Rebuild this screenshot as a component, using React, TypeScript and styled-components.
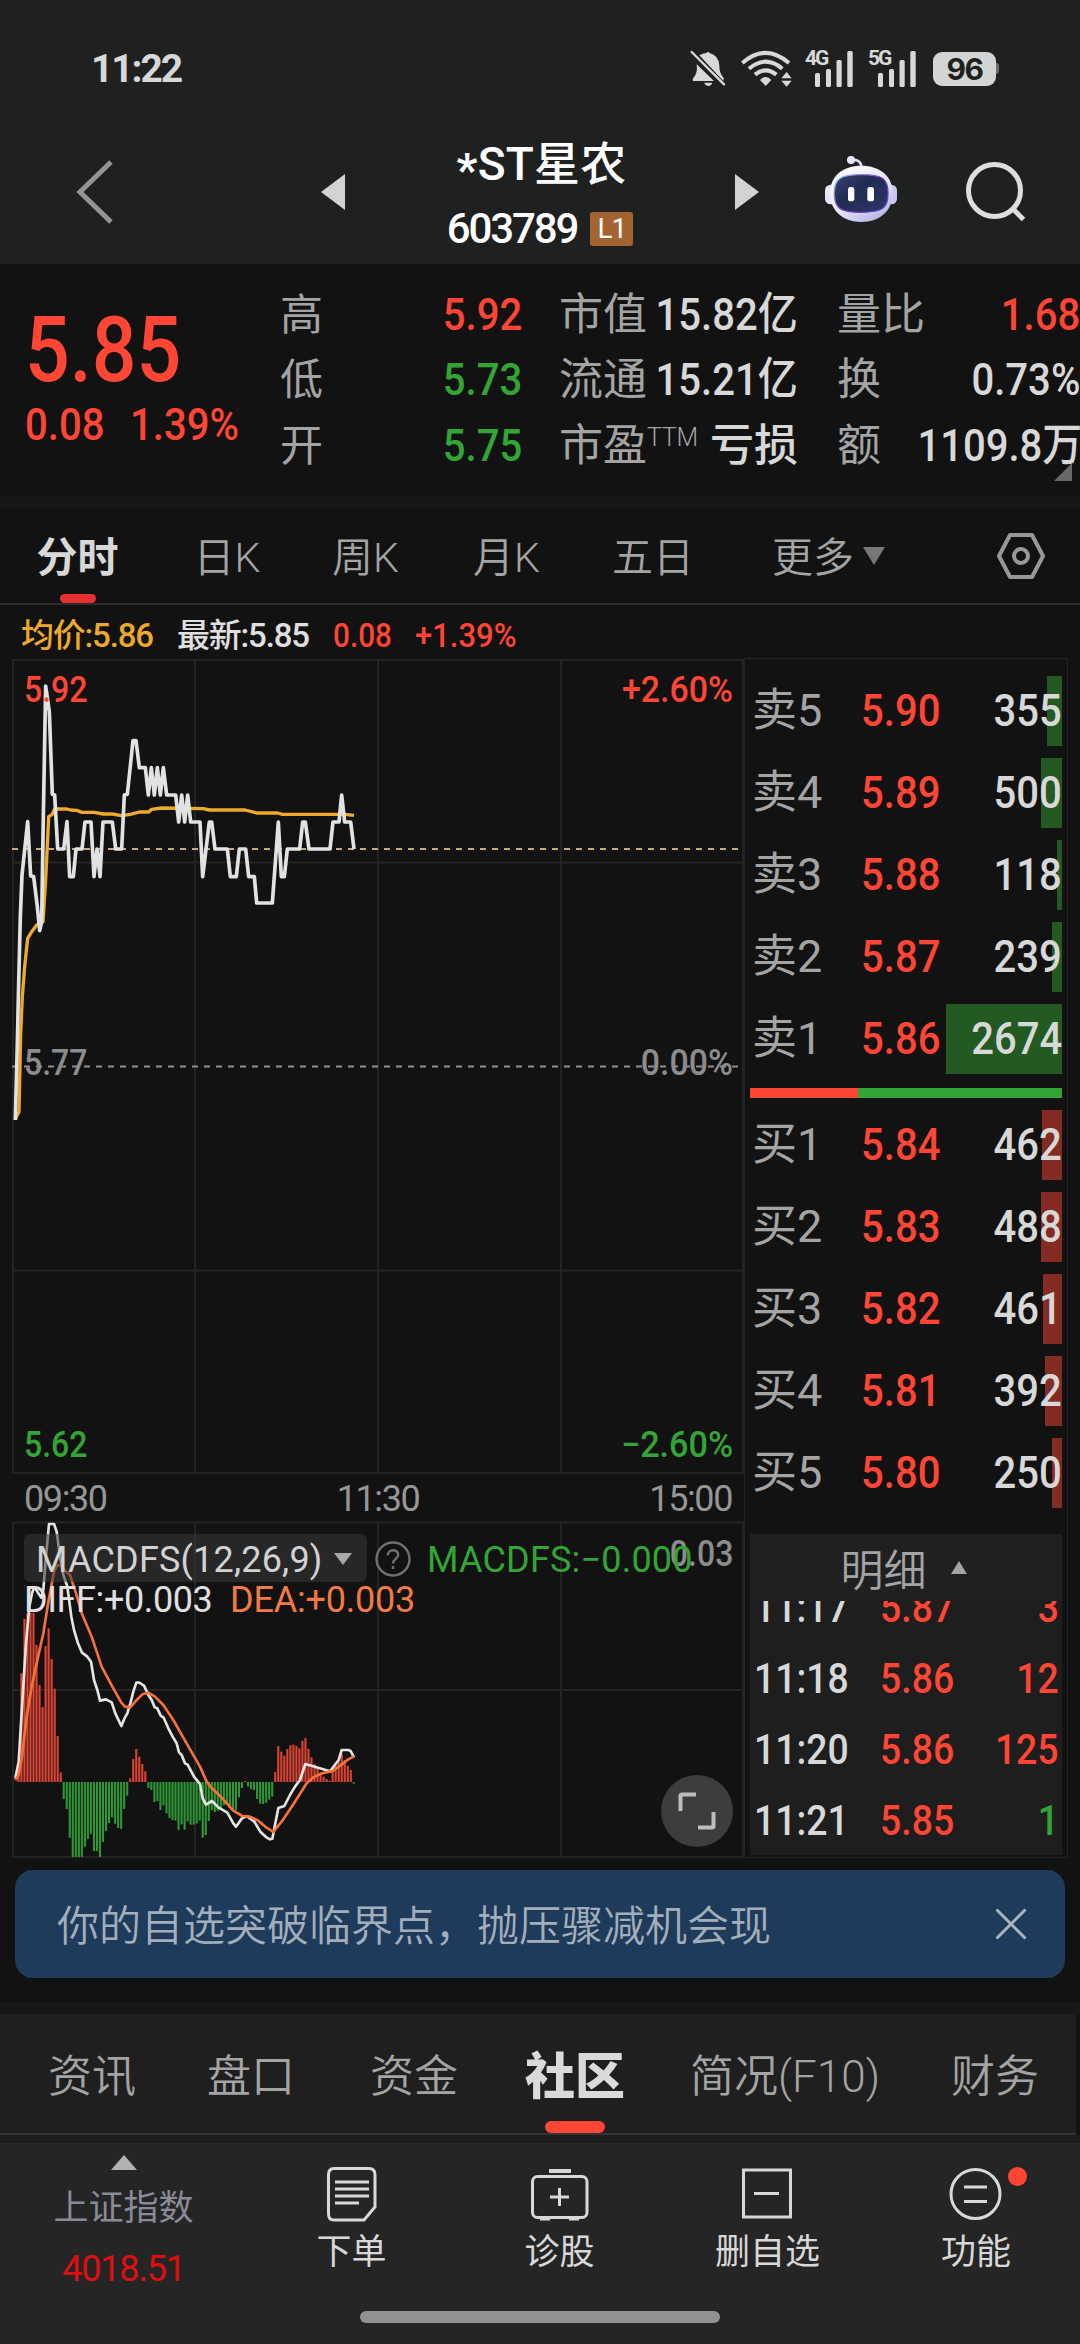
import React from "react";
import styled, { createGlobalStyle } from "styled-components";

const RED = "#ff4634";
const GREEN = "#32a534";
const WHITE = "#d8d8d8";
const GREY = "#a4a4a4";
const DIM = "#8c8c8c";
const LINE = "#242424";

const GlobalStyle = createGlobalStyle`
  * { box-sizing: border-box; }
  html, body { margin: 0; padding: 0; background: #121212; }
  body {
    overflow: hidden;
    font-family: Roboto, "Noto Sans CJK SC", sans-serif;
    -webkit-font-smoothing: antialiased;
  }
  svg { display: block; flex: none; }
`;

const Page = styled.div`
  width: 1080px;
  height: 2344px;
  display: flex;
  flex-direction: column;
  background: #121212;
  overflow: hidden;
`;

const Txt = styled.span<{
  $size: number;
  $color?: string;
  $weight?: number;
  $ls?: number;
  $line?: number;
  $mt?: number;
}>`
  display: block;
  flex: none;
  white-space: nowrap;
  font-size: ${(p) => p.$size}px;
  color: ${(p) => p.$color ?? WHITE};
  font-weight: ${(p) => p.$weight ?? 400};
  letter-spacing: ${(p) => p.$ls ?? 0}px;
  line-height: ${(p) => p.$line ?? 50}px;
  margin-top: ${(p) => p.$mt ?? 0}px;
`;

/* Condensed figures used for prices and volumes. */
const Figure = styled(Txt)<{ $end?: boolean; $scale?: number }>`
  transform: scaleX(${(p) => p.$scale ?? 0.89});
  transform-origin: ${(p) => (p.$end ? "right" : "left")} center;
`;

/* ---------- header ---------- */

const Header = styled.header`
  height: 264px;
  flex: none;
  background: #1f2120;
`;

const StatusBar = styled.div`
  height: 137px;
  display: flex;
  align-items: center;
  justify-content: space-between;
  padding: 0 81px 0 91px;
`;

const StatusIcons = styled.div`
  display: flex;
  align-items: center;
`;

const StatusIcon = styled.div<{ $w: number }>`
  width: ${(p) => p.$w}px;
`;

const Signal = styled.div`
  position: relative;
  width: 48px;
  margin-right: 15px;
`;

const SignalLabel = styled.span`
  position: absolute;
  left: 0;
  top: -5px;
  font-size: 21px;
  line-height: 24px;
  font-weight: 700;
  letter-spacing: -2px;
  color: ${WHITE};
`;

const Battery = styled.div`
  width: 63px;
  height: 34px;
  border-radius: 9px;
  margin-left: 2px;
  background: #d3d5d4;
  color: #1f2120;
  font: 700 30px/35px Inter, sans-serif;
  letter-spacing: -1.5px;
  text-align: center;
`;

const BatteryNub = styled.div`
  width: 3px;
  height: 11px;
  background: #6b6d6c;
  border-radius: 0 3px 3px 0;
`;

const TitleBar = styled.div`
  height: 127px;
  display: flex;
  align-items: flex-start;
`;

const IconSlot = styled.div<{ $w: number; $l?: number; $t?: number }>`
  width: ${(p) => p.$w}px;
  padding-left: ${(p) => p.$l ?? 0}px;
  padding-top: ${(p) => p.$t ?? 0}px;
  flex: none;
`;

const StockTitle = styled.div`
  width: 390px;
  flex: none;
  display: flex;
  flex-direction: column;
  align-items: center;
  padding-top: 1px;
`;

const StockName = styled.div`
  padding-left: 3px;
`;

const Star = styled.span`
  position: relative;
  top: 6px;
  font-weight: 700;
`;

const CodeRow = styled.div`
  display: flex;
  align-items: center;
  gap: 13px;
  margin-top: 16px;
`;

const LevelBadge = styled.span`
  width: 43px;
  height: 34px;
  border-radius: 3px;
  background: #a36431;
  color: #fff;
  font-size: 28px;
  line-height: 34px;
  letter-spacing: -1px;
  text-align: center;
`;

/* ---------- quote ---------- */

const Quote = styled.section`
  height: 232px;
  flex: none;
  position: relative;
  display: grid;
  grid-template-columns: 281px 241px 238px 242px;
  padding-top: 18px;
`;

const MainPrice = styled.div`
  padding: 24px 0 0 25px;
`;

const ChangeRow = styled.div`
  display: grid;
  grid-template-columns: 105px 120px;
  margin-top: 4px;
`;

const QuoteCol = styled.div<{ $ml?: number }>`
  margin-left: ${(p) => (p.$ml ?? 0) - 1}px;
  margin-right: -${(p) => p.$ml ?? 0}px;
  display: flex;
  flex-direction: column;
`;

const QuoteRow = styled.div`
  height: 65.5px;
  display: grid;
  grid-template-columns: 60px 1fr;
  align-items: center;
`;

const QuoteValue = styled.div`
  display: flex;
  justify-content: flex-end;
`;

const LabelGroup = styled.div`
  display: flex;
  align-items: flex-start;
`;

const Corner = styled.div`
  position: absolute;
  right: 8px;
  top: 199px;
  border-left: 18px solid transparent;
  border-bottom: 18px solid #696969;
`;

const Strip = styled.div`
  height: 12px;
  flex: none;
  background: #171717;
`;

/* ---------- chart tabs ---------- */

const ChartTabs = styled.nav`
  height: 97px;
  flex: none;
  display: flex;
  border-bottom: 2px solid #2b2b2b;
`;

const ChartTab = styled.div<{ $w: number }>`
  width: ${(p) => p.$w}px;
  flex: none;
  display: flex;
  flex-direction: column;
  align-items: center;
  justify-content: space-between;
  padding-top: 25px;
`;

const MoreTab = styled.div`
  width: 268px;
  flex: none;
  display: flex;
  gap: 9px;
  padding: 25px 0 0 47px;
`;

const Mark = styled.i<{ $w: number; $h: number; $c: string }>`
  display: block;
  width: ${(p) => p.$w}px;
  height: ${(p) => p.$h}px;
  background: ${(p) => p.$c};
  border-radius: ${(p) => p.$h / 2}px;
`;

const Triangle = styled.i<{ $w: number; $h: number; $c: string; $down?: boolean; $mt?: number }>`
  display: block;
  width: 0;
  height: 0;
  margin-top: ${(p) => p.$mt ?? 0}px;
  border-left: ${(p) => p.$w / 2}px solid transparent;
  border-right: ${(p) => p.$w / 2}px solid transparent;
  ${(p) => (p.$down ? "border-top" : "border-bottom")}: ${(p) => p.$h}px solid ${(p) => p.$c};
`;

/* ---------- market area ---------- */

const Market = styled.section`
  height: 1253px;
  flex: none;
  display: grid;
  grid-template-columns: 744px 324px;
`;

const ChartColumn = styled.div`
  display: flex;
  flex-direction: column;
`;

const InfoRow = styled.div`
  height: 54px;
  display: grid;
  grid-template-columns: 156px 156px 82px 140px;
  align-items: center;
  padding: 6px 0 0 21px;
`;

const ChartBox = styled.div<{ $h: number }>`
  position: relative;
  height: ${(p) => p.$h}px;
  flex: none;
`;

const Overlay = styled.div<{ $top: number; $left?: number; $right?: number }>`
  position: absolute;
  top: ${(p) => p.$top}px;
  ${(p) => (p.$left !== undefined ? `left: ${p.$left}px;` : "")}
  ${(p) => (p.$right !== undefined ? `right: ${p.$right}px;` : "")}
  display: flex;
  align-items: center;
`;

const TimeRow = styled.div`
  height: 48px;
  flex: none;
  display: flex;
  justify-content: space-between;
  align-items: center;
  padding: 4px 12px 0 24px;
`;

const IndicatorButton = styled.button`
  width: 343px;
  height: 48px;
  border: 0;
  border-radius: 6px;
  padding: 4px 15px 0 12px;
  background: rgba(56, 56, 56, 0.55);
  display: flex;
  align-items: center;
  justify-content: space-between;
  font-family: inherit;
`;

const ExpandButton = styled.div`
  position: absolute;
  left: 661px;
  top: 254px;
  width: 72px;
  height: 72px;
  border-radius: 50%;
  background: #3d3d3d;
  display: flex;
  align-items: center;
  justify-content: center;
`;

/* ---------- order book ---------- */

const Book = styled.div`
  margin-top: 53px;
  height: 1200px;
  border: 1px solid ${LINE};
  padding: 11px 5px 0 5px;
  display: flex;
  flex-direction: column;
`;

const BookRow = styled.div`
  position: relative;
  height: 82px;
  flex: none;
  display: grid;
  grid-template-columns: 111px 90px 111px;
  align-items: center;
`;

const VolumeBar = styled.i<{ $w: number; $c: string }>`
  position: absolute;
  right: 0;
  top: 6px;
  width: ${(p) => p.$w}px;
  height: 70px;
  background: ${(p) => p.$c};
`;

const Cell = styled.div<{ $l?: number; $end?: boolean }>`
  position: relative;
  display: flex;
  padding-left: ${(p) => p.$l ?? 0}px;
  justify-content: ${(p) => (p.$end ? "flex-end" : "flex-start")};
`;

const RatioBar = styled.div`
  height: 10px;
  flex: none;
  margin: 8px 0 6px;
  background: linear-gradient(to right, ${RED} 0 108px, ${GREEN} 108px);
`;

const Details = styled.div`
  margin-top: 20px;
  height: 321px;
  flex: none;
  display: flex;
  flex-direction: column;
  background: #1e1e1e;
`;

const DetailsHead = styled.div`
  height: 67px;
  flex: none;
  display: flex;
  align-items: flex-start;
  justify-content: center;
  gap: 24px;
  padding: 12px 5px 0 0;
  background: #202020;
`;

const DetailsList = styled.div`
  flex: 1;
  overflow: hidden;
`;

const DetailRows = styled.div`
  margin-top: -29px;
`;

const DetailRow = styled.div`
  height: 71px;
  display: grid;
  grid-template-columns: 130px 90px 89px;
  align-items: center;
`;

/* ---------- banner and tabs ---------- */

const BannerWrap = styled.div`
  height: 144px;
  flex: none;
  padding: 12px 15px 0;
`;

const Banner = styled.div`
  height: 108px;
  border-radius: 18px;
  background: #1f3b5b;
  display: flex;
  align-items: center;
  justify-content: space-between;
  padding: 0 38px 0 42px;
`;

const Sections = styled.nav`
  width: 1076px;
  height: 121px;
  flex: none;
  background: #1f1f1f;
  border-bottom: 2px solid #343434;
  display: flex;
`;

const SectionTab = styled.div<{ $w: number }>`
  width: ${(p) => p.$w}px;
  flex: none;
  display: flex;
  flex-direction: column;
  align-items: center;
  justify-content: space-between;
  padding-top: 38px;
`;

/* ---------- bottom bar ---------- */

const Gap = styled.div`
  height: 8px;
  flex: none;
  background: #1c1c1c;
`;

const Bottom = styled.footer`
  flex: 1;
  background: #252525;
  display: flex;
  flex-direction: column;
  align-items: center;
  justify-content: space-between;
  padding-bottom: 21px;
`;

const BottomItems = styled.div`
  width: 1080px;
  display: grid;
  grid-template-columns: 247px 209px 207px 209px 208px;
`;

const IndexItem = styled.div`
  display: flex;
  flex-direction: column;
  align-items: center;
  padding-top: 12px;
`;

const ActionItem = styled.div`
  display: flex;
  flex-direction: column;
  align-items: center;
  padding-top: 21px;
`;

const ActionIcon = styled.div`
  position: relative;
  height: 60px;
`;

const Dot = styled.i`
  position: absolute;
  left: 62px;
  top: 3px;
  width: 19px;
  height: 19px;
  border-radius: 50%;
  background: ${RED};
`;

/* ---------- data ---------- */

const PRICE =
  "46,1410 52,1180 56,1000 61,800 66,675 83,515 92,678 101,680 112,770 119,842 125,815 130,500 137,108 148,185 157,433 164,435 173,597 191,597 201,515 209,680 220,680 228,597 246,597 255,516 273,516 282,680 291,597 300,680 309,516 337,516 347,597 365,597 373,435 382,433 399,272 408,272 418,353 436,353 445,435 454,353 463,435 472,353 481,435 490,353 500,435 527,435 536,516 545,435 554,516 563,435 572,516 600,516 608,680 628,516 635,516 645,597 682,597 691,680 709,680 718,597 737,597 746,680 763,680 770,759 817,759 835,516 844,680 853,680 862,597 899,597 908,516 916,516 927,597 990,597 999,516 1017,516 1025,435 1034,516 1052,516 1062,597";
const AVERAGE =
  "47,1405 57,1385 62,1150 67,1040 74,950 83,865 92,850 110,825 129,815 137,690 146,500 156,494 164,477 200,477 212,480 230,481 246,487 282,487 310,492 337,492 364,497 391,493 418,486 446,486 455,478 485,474 610,476 628,480 735,480 770,489 833,489 847,493 1034,493 1062,496";
const DIFF =
  "46,985 56,935 68,740 78,580 88,470 96,430 100,418 106,415 115,430 124,443 130,420 137,330 147,222 162,222 170,245 180,320 190,375 202,410 214,500 222,540 234,580 246,608 262,620 273,635 282,690 292,720 300,752 318,748 335,757 346,790 364,828 375,802 382,790 391,760 400,725 409,698 418,698 432,707 445,735 455,750 464,772 472,775 482,797 491,803 505,835 518,860 530,880 537,907 545,915 555,940 563,944 582,980 600,1002 608,1045 618,1064 636,1053 655,1072 682,1088 700,1120 708,1130 726,1105 740,1098 763,1115 781,1145 799,1162 810,1168 817,1166 826,1120 835,1074 853,1068 870,1035 885,1010 900,990 916,942 990,964 1016,930 1025,900 1045,900 1052,903 1062,922";
const DEA =
  "46,990 56,975 66,920 80,800 95,710 110,640 130,550 146,450 162,365 172,345 185,348 195,362 210,375 228,430 246,492 275,560 305,650 337,710 364,758 375,770 391,772 410,750 427,733 445,728 465,740 490,765 520,810 555,872 600,950 620,995 636,1015 664,1042 700,1082 727,1098 750,1100 775,1112 800,1133 820,1146 850,1108 885,1055 920,1000 940,982 965,970 998,963 1030,940 1045,928 1062,919";
const HISTOGRAM = [
  950, 670, 507, 490, 488, 488, 585, 705, 771, 588, 535, 627, 716, 858, 967, 1047, 1077, 1163,
  1221, 1221, 1221, 1221, 1190, 1167, 1152, 1203, 1203, 1221, 1176, 1143, 1119, 1102, 1121, 1134,
  1137, 1077, 1037, 985, 927, 897, 920, 942, 964, 1014, 1020, 1056, 1053, 1080, 1066, 1090, 1104,
  1110, 1112, 1140, 1123, 1139, 1114, 1124, 1124, 1120, 1112, 1163, 1155, 1113, 1080, 1086, 1082,
  1078, 1066, 1060, 1070, 1078, 1080, 1042, 1014, 993, 1010, 1018, 1020, 1047, 1061, 1062, 1058,
  1049, 1040, 966, 888, 905, 917, 897, 886, 884, 888, 895, 873, 864, 897, 922, 942, 955, 967, 980,
  987, 992, 958, 948, 935, 912, 930, 947, 960, 1001,
];

const SELLS: [string, string, string, number][] = [
  ["卖5", "5.90", "355", 15],
  ["卖4", "5.89", "500", 21],
  ["卖3", "5.88", "118", 5],
  ["卖2", "5.87", "239", 10],
  ["卖1", "5.86", "2674", 116],
];
const BUYS: [string, string, string, number][] = [
  ["买1", "5.84", "462", 20],
  ["买2", "5.83", "488", 21],
  ["买3", "5.82", "461", 19],
  ["买4", "5.81", "392", 17],
  ["买5", "5.80", "250", 10],
];
const TRADES: [string, string, string, boolean][] = [
  ["11:17", "5.87", "3", true],
  ["11:18", "5.86", "12", true],
  ["11:20", "5.86", "125", true],
  ["11:21", "5.85", "1", false],
];

/* ---------- pieces ---------- */

const Num = ({
  c = WHITE,
  s = 45,
  k,
  end,
  children,
}: {
  c?: string;
  s?: number;
  k?: number;
  end?: boolean;
  children: React.ReactNode;
}) => (
  <Figure $size={s} $color={c} $weight={500} $end={end} $scale={k}>
    {children}
  </Figure>
);

const Label = ({ s = 43, w = 400, children }: { s?: number; w?: number; children: React.ReactNode }) => (
  <Txt $size={s} $color={GREY} $weight={w}>
    {children}
  </Txt>
);

const QuoteItem = ({ label, value, c }: { label: React.ReactNode; value: string; c?: string }) => (
  <QuoteRow>
    <LabelGroup>{label}</LabelGroup>
    <QuoteValue>
      <Num end c={c}>{value}</Num>
    </QuoteValue>
  </QuoteRow>
);

const SignalBars = ({ name }: { name: string }) => (
  <Signal>
    <SignalLabel>{name}</SignalLabel>
    <svg width="48" height="36" viewBox="0 0 48 36" fill={WHITE}>
      <rect x="10" y="22" width="5" height="14" rx="1.5" />
      <rect x="21" y="18" width="5" height="18" rx="1.5" />
      <rect x="31.5" y="9" width="5.2" height="27" rx="1.5" />
      <rect x="42.3" y="0" width="5.4" height="36" rx="1.5" />
    </svg>
  </Signal>
);

const Robot = () => (
  <svg width="80" height="76" viewBox="60 30 240 228">
    <defs>
      <linearGradient id="shell" x1="0" y1="0" x2="0.7" y2="1">
        <stop offset="0" stopColor="#ffffff" />
        <stop offset="0.6" stopColor="#e9e8fb" />
        <stop offset="1" stopColor="#b9b6e6" />
      </linearGradient>
      <linearGradient id="rim" x1="0" y1="0" x2="1" y2="1">
        <stop offset="0" stopColor="#8fd0f2" />
        <stop offset="0.5" stopColor="#7a35c8" />
        <stop offset="1" stopColor="#4c46c9" />
      </linearGradient>
      <linearGradient id="visor" x1="0" y1="0" x2="1" y2="1">
        <stop offset="0" stopColor="#39456f" />
        <stop offset="0.4" stopColor="#202c52" />
        <stop offset="1" stopColor="#2c3768" />
      </linearGradient>
    </defs>
    <path d="M156 60Q185 58 184 84" fill="none" stroke="#e4e3f5" strokeWidth="8" />
    <circle cx="153" cy="60" r="12" fill="#e8e6fa" />
    <rect x="75" y="134" width="40" height="59" rx="17" fill="#e6e5f7" />
    <rect x="252" y="134" width="39" height="59" rx="17" fill="#c9c6ef" />
    <path
      d="M184 77C240 77 278 108 278 160S240 246 184 246S90 212 90 160S128 77 184 77Z"
      fill="url(#shell)"
    />
    <path
      d="M184 104C248 104 264 116 264 160S248 217 184 217S103 204 103 160S120 104 184 104Z"
      fill="url(#visor)"
      stroke="url(#rim)"
      strokeWidth="4"
    />
    <rect x="144" y="141" width="19" height="43" rx="8" fill="#fff" />
    <rect x="202" y="141" width="20" height="43" rx="8" fill="#fff" />
  </svg>
);

const PriceChart = () => (
  <ChartBox $h={814}>
    <svg width="744" height="816" viewBox="0 659 744 816">
      <path
        d="M12 660H744M12 1473H744M13 659V1474M195 659V1474M378 659V1474M561 659V1474M743 659V1474M12 862.5H744M12 1270.5H744"
        fill="none"
        stroke={LINE}
        strokeWidth="2"
      />
      <path d="M12 1066.5H738" stroke="#8f8f8f" strokeWidth="2" strokeDasharray="6 6" />
      <path d="M12 849H738" stroke="#c9a978" strokeWidth="2" strokeDasharray="6 6" />
      <g transform="translate(0 650) scale(0.33333)" fill="none" strokeLinejoin="round">
        <polyline points={AVERAGE} stroke="#efaa2a" strokeWidth="10" />
        <polyline points={PRICE} stroke="#e2e2e2" strokeWidth="11" />
      </g>
    </svg>
    <Overlay $top={6} $left={24}>
      <Num s={36} c={RED}>5.92</Num>
    </Overlay>
    <Overlay $top={6} $right={11}>
      <Num s={36} k={0.94} c={RED} end>+2.60%</Num>
    </Overlay>
    <Overlay $top={379} $left={24}>
      <Num s={36} c={DIM}>5.77</Num>
    </Overlay>
    <Overlay $top={379} $right={11}>
      <Num s={36} k={0.94} c={DIM} end>0.00%</Num>
    </Overlay>
    <Overlay $top={761} $left={24}>
      <Num s={36} c={GREEN}>5.62</Num>
    </Overlay>
    <Overlay $top={761} $right={11}>
      <Num s={36} k={0.95} c={GREEN} end>−2.60%</Num>
    </Overlay>
  </ChartBox>
);

const MacdChart = () => (
  <ChartBox $h={336}>
    <svg width="744" height="338" viewBox="0 1521 744 338">
      <path
        d="M12 1522.5H744M12 1857H744M13 1522V1858M195 1522V1858M378 1522V1858M561 1522V1858M743 1522V1858M12 1690H744"
        fill="none"
        stroke={LINE}
        strokeWidth="2"
      />
      <g transform="translate(0 1450) scale(0.33333)">
        {HISTOGRAM.map((y, i) => (
          <rect
            key={i}
            x={55 + i * 9.065 - 3}
            y={Math.min(y, 996)}
            width="6.4"
            height={Math.abs(y - 996)}
            fill={y < 996 ? "#dc4433" : "#2f9635"}
          />
        ))}
        <g fill="none" strokeLinejoin="round" strokeWidth="8">
          <polyline points={DIFF} stroke="#e6e4e2" />
          <polyline points={DEA} stroke="#f6703a" />
        </g>
      </g>
    </svg>
    <Overlay $top={8} $right={11}>
      <Num s={36} c={DIM} end>0.03</Num>
    </Overlay>
    <Overlay $top={13} $left={24}>
      <IndicatorButton>
        <Txt $size={36} $ls={0.2} $color="#d2d2d2">
          MACDFS(12,26,9)
        </Txt>
        <Triangle $down $w={19} $h={12} $c="#a9a9a9" $mt={-3} />
      </IndicatorButton>
    </Overlay>
    <Overlay $top={20} $left={375}>
      <svg width="36" height="36" viewBox="0 0 36 36" fill="none" stroke="#707070" strokeWidth="2.4">
        <circle cx="18" cy="18" r="16.5" />
        <path d="M12.8 14.5C12.8 7.4 23.4 7.8 23.2 14C23 17.8 18 18.2 18 22.5" />
        <path d="M18 25V28" />
      </svg>
    </Overlay>
    <Overlay $top={14} $left={427}>
      <Txt $size={36} $color={GREEN} $ls={0.2}>
        MACDFS:−0.000
      </Txt>
    </Overlay>
    <Overlay $top={54} $left={24}>
      <Txt $size={36} $color="#e0e0e0" $ls={-0.4}>
        DIFF:+0.003
      </Txt>
    </Overlay>
    <Overlay $top={54} $left={230}>
      <Txt $size={36} $color="#f17a45" $ls={-0.2}>
        DEA:+0.003
      </Txt>
    </Overlay>
    <ExpandButton>
      <svg width="38" height="38" viewBox="0 0 38 38" fill="none" stroke="#bdbdbd" strokeWidth="4">
        <path d="M2.500 19V4Q2.500 2.500 4 2.500H18M35.500 20V34Q35.500 35.500 34 35.500H20" />
      </svg>
    </ExpandButton>
  </ChartBox>
);

const Orders = ({ rows, color }: { rows: [string, string, string, number][]; color: string }) => (
  <>
    {rows.map(([name, price, volume, width]) => (
      <BookRow key={name}>
        <VolumeBar $w={width} $c={color} />
        <Cell $l={2}>
          <Label s={45}>{name}</Label>
        </Cell>
        <Cell>
          <Num c={RED}>{price}</Num>
        </Cell>
        <Cell $end>
          <Num end>{volume}</Num>
        </Cell>
      </BookRow>
    ))}
  </>
);

const Action = ({ name, dot, children }: { name: string; dot?: boolean; children: React.ReactNode }) => (
  <ActionItem>
    <ActionIcon>
      <svg width="60" height="60" viewBox="0 0 60 60" fill="none" stroke={WHITE} strokeWidth="3">
        {children}
      </svg>
      {dot && <Dot />}
    </ActionIcon>
    <Txt $size={35} $line={52} $mt={3}>
      {name}
    </Txt>
  </ActionItem>
);

export default function App() {
  return (
    <Page>
      <GlobalStyle />
      <Header>
        <StatusBar>
          <Txt $size={39} $weight={700} $ls={-2.1} $mt={1}>
            11:22
          </Txt>
          <StatusIcons>
            <StatusIcon $w={50}>
              <svg width="37" height="37" viewBox="60 60 111 111" fill={WHITE}>
                <path d="M88 76Q98 70 109 69Q110 66 114 66Q118 66 119 69Q146 76 148 106Q147 130 161 144L160 153Z" />
                <path d="M80 103L132 153H70Q66 151 69 145Q84 130 80 103Z" />
                <path d="M102 158H127Q123 168 114 168Q106 167 102 158Z" />
                <path d="M65 66L162 163" stroke={WHITE} strokeWidth="7" strokeLinecap="round" />
              </svg>
            </StatusIcon>
            <StatusIcon $w={65}>
              <svg width="53" height="37" viewBox="208 60 159 111" fill="none" stroke={WHITE} strokeWidth="12">
                <path d="M215 99Q285 38 355 99" />
                <path d="M235 116Q285 74 335 116" />
                <path d="M253 134Q285 108 317 134" />
                <path d="M268 150Q285 132 302 150L285 168Z" fill={WHITE} stroke="none" />
                <path d="M332 145L348 126L363 145ZM332 152L348 170L363 152Z" fill={WHITE} stroke="none" />
              </svg>
            </StatusIcon>
            <SignalBars name="4G" />
            <SignalBars name="5G" />
            <Battery>96</Battery>
            <BatteryNub />
          </StatusIcons>
        </StatusBar>
        <TitleBar>
          <IconSlot $w={320} $l={76} $t={23}>
            <svg width="38" height="64" viewBox="0 0 38 64" fill="none" stroke="#939393" strokeWidth="5">
              <path d="M35 2L4 32L35 62" />
            </svg>
          </IconSlot>
          <IconSlot $w={25} $l={1} $t={37}>
            <svg width="24" height="36" viewBox="0 0 24 36" fill="#d3d3d3">
              <path d="M0 18L24 0V36Z" />
            </svg>
          </IconSlot>
          <StockTitle>
            <StockName>
              <Txt $size={46} $weight={500} $color="#fff" $line={52} $ls={0.2}>
                <Star>*</Star>ST星农
              </Txt>
            </StockName>
            <CodeRow>
              <Txt $size={42} $weight={500} $color="#fff" $ls={-2.1} $line={46}>
                603789
              </Txt>
              <LevelBadge>L1</LevelBadge>
            </CodeRow>
          </StockTitle>
          <IconSlot $w={85} $t={37}>
            <svg width="24" height="36" viewBox="0 0 24 36" fill="#d3d3d3">
              <path d="M24 18L0 0V36Z" />
            </svg>
          </IconSlot>
          <IconSlot $w={144} $t={13}>
            <Robot />
          </IconSlot>
          <IconSlot $w={64} $t={23}>
            <svg width="64" height="64" viewBox="0 0 64 64" fill="none" stroke="#dedede" strokeWidth="5">
              <circle cx="30.500" cy="30.500" r="26" />
              <path d="M48.500 48.500L59.500 59.500" />
            </svg>
          </IconSlot>
        </TitleBar>
      </Header>

      <Quote>
        <MainPrice>
          <Figure $size={90} $weight={500} $color={RED} $line={90} $scale={0.875}>
            5.85
          </Figure>
          <ChangeRow>
            <Num c={RED}>0.08</Num>
            <Num c={RED}>1.39%</Num>
          </ChangeRow>
        </MainPrice>
        <QuoteCol>
          <QuoteItem label={<Label>高</Label>} value="5.92" c={RED} />
          <QuoteItem label={<Label>低</Label>} value="5.73" c={GREEN} />
          <QuoteItem label={<Label>开</Label>} value="5.75" c={GREEN} />
        </QuoteCol>
        <QuoteCol $ml={38}>
          <QuoteItem label={<Label s={44}>市值</Label>} value="15.82亿" />
          <QuoteItem label={<Label s={44}>流通</Label>} value="15.21亿" />
          <QuoteRow>
            <LabelGroup>
              <Label s={44}>市盈</Label>
              <Txt $size={25} $weight={300} $color={GREY} $line={34} $ls={-0.3}>TTM</Txt>
            </LabelGroup>
            <QuoteValue>
              <Txt $size={44} $weight={500}>亏损</Txt>
            </QuoteValue>
          </QuoteRow>
        </QuoteCol>
        <QuoteCol $ml={78}>
          <QuoteItem label={<Label s={44}>量比</Label>} value="1.68" c={RED} />
          <QuoteItem label={<Label s={44}>换</Label>} value="0.73%" />
          <QuoteItem label={<Label s={44}>额</Label>} value="1109.8万" />
        </QuoteCol>
        <Corner />
      </Quote>
      <Strip />

      <ChartTabs>
        <ChartTab $w={155}>
          <Txt $size={41} $weight={700}>分时</Txt>
          <Mark $w={36} $h={9} $c="#e83131" />
        </ChartTab>
        <ChartTab $w={144}><Label s={41} w={350}>日K</Label></ChartTab>
        <ChartTab $w={133}><Label s={41} w={350}>周K</Label></ChartTab>
        <ChartTab $w={149}><Label s={41} w={350}>月K</Label></ChartTab>
        <ChartTab $w={144}><Label s={41} w={350}>五日</Label></ChartTab>
        <MoreTab>
          <Label s={41} w={350}>更多</Label>
          <Triangle $down $w={22} $h={18} $c="#777" $mt={14} />
        </MoreTab>
        <IconSlot $w={56} $l={3} $t={24}>
          <svg width="50" height="48" viewBox="0 0 50 48" fill="none" stroke="#989898" strokeWidth="4" strokeLinejoin="round">
            <path d="M14 3H36L47 24L36 45H14L3 24Z" />
            <circle cx="25" cy="24" r="7" />
          </svg>
        </IconSlot>
      </ChartTabs>

      <Market>
        <ChartColumn>
          <InfoRow>
            <Txt $size={33} $weight={500} $color="#eca92b" $ls={-1.2}>均价:5.86</Txt>
            <Txt $size={33} $weight={500} $color="#e0e0e0" $ls={-1.2}>最新:5.85</Txt>
            <Num s={33} k={0.9} c={RED}>0.08</Num>
            <Num s={33} k={0.94} c={RED}>+1.39%</Num>
          </InfoRow>
          <PriceChart />
          <TimeRow>
            <Txt $size={36} $color="#969696" $ls={-1.4}>09:30</Txt>
            <Txt $size={36} $color="#969696" $ls={-1.4}>11:30</Txt>
            <Txt $size={36} $color="#969696" $ls={-1.4}>15:00</Txt>
          </TimeRow>
          <MacdChart />
        </ChartColumn>
        <Book>
          <Orders rows={SELLS} color="#225a22" />
          <RatioBar />
          <Orders rows={BUYS} color="#842b23" />
          <Details>
            <DetailsHead>
              <Label w={350}>明细</Label>
              <Triangle $w={17} $h={13} $c={GREY} $mt={15} />
            </DetailsHead>
            <DetailsList>
              <DetailRows>
                {TRADES.map(([time, price, volume, up]) => (
                  <DetailRow key={time}>
                    <Cell $l={4}><Num s={42}>{time}</Num></Cell>
                    <Cell><Num s={42} c={RED}>{price}</Num></Cell>
                    <Cell $end><Num s={42} c={up ? RED : GREEN} end>{volume}</Num></Cell>
                  </DetailRow>
                ))}
              </DetailRows>
            </DetailsList>
          </Details>
        </Book>
      </Market>

      <BannerWrap>
        <Banner>
          <Txt $size={42} $color="#a3aebb" $weight={350} $mt={5}>你的自选突破临界点，抛压骤减机会现</Txt>
          <svg width="32" height="32" viewBox="0 0 32 32" stroke="#a9b4bf" strokeWidth="3">
            <path d="M1.500 1.500L30.500 30.500M30.500 1.500L1.500 30.500" />
          </svg>
        </Banner>
      </BannerWrap>
      <Strip />

      <Sections>
        <SectionTab $w={184}><Label s={44} w={350}>资讯</Label></SectionTab>
        <SectionTab $w={134}><Label s={44} w={350}>盘口</Label></SectionTab>
        <SectionTab $w={192}><Label s={44} w={350}>资金</Label></SectionTab>
        <SectionTab $w={130}>
          <Txt $size={50} $weight={900} $color="#dadada">社区</Txt>
          <Mark $w={60} $h={12} $c={RED} />
        </SectionTab>
        <SectionTab $w={290}><Label s={44} w={350}>简况(F10)</Label></SectionTab>
        <SectionTab $w={130}><Label s={44} w={350}>财务</Label></SectionTab>
      </Sections>
      <Gap />

      <Bottom>
        <BottomItems>
          <IndexItem>
            <Triangle $w={26} $h={15} $c="#b2b2b2" />
            <Txt $size={35} $color="#898b99" $line={52} $mt={13}>上证指数</Txt>
            <Txt $size={36} $color="#e00f0f" $ls={-1.2} $mt={9}>4018.51</Txt>
          </IndexItem>
          <Action name="下单">
            <path d="M12 4.500H47Q53 4.500 53 10.500V43L42 56H12Q6.500 56 6.500 50V10.500Q6.500 4.500 12 4.500Z" />
            <path d="M13 18H47M13 25H47M13 32H47M13 39H37" />
          </Action>
          <Action name="诊股">
            <path d="M19 7H41" strokeWidth="4" />
            <rect x="2.500" y="12.500" width="54.500" height="41" rx="5" />
            <path d="M29.500 24V42M20 33H39M10 55H20M39 55H49" />
          </Action>
          <Action name="删自选">
            <rect x="5.500" y="6" width="47" height="47" />
            <path d="M16 29.500H41" />
          </Action>
          <Action name="功能" dot>
            <circle cx="29.500" cy="30" r="24.500" />
            <path d="M18 23H41M18 37.500H41" />
          </Action>
        </BottomItems>
        <Mark $w={360} $h={12} $c="#929292" />
      </Bottom>
    </Page>
  );
}
